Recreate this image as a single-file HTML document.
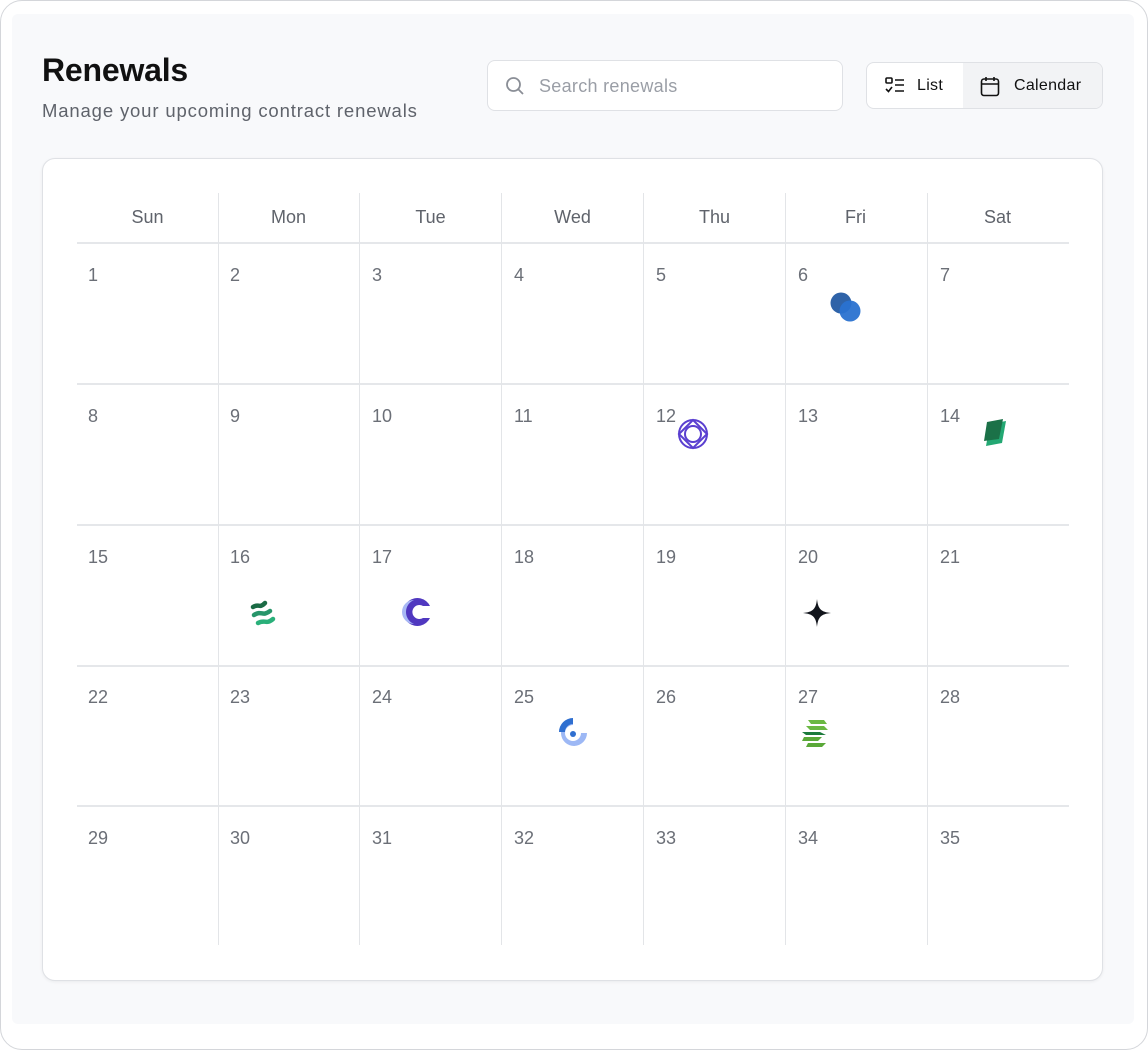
<!DOCTYPE html>
<html><head><meta charset="utf-8"><style>
*{box-sizing:border-box;margin:0;padding:0}
body{width:1148px;height:1038px;background:#fff;font-family:"Liberation Sans",sans-serif;position:relative;overflow:hidden}
.frame{position:absolute;left:0;top:0;width:1148px;height:1050px;border:1px solid #d4d6da;border-radius:22px;background:#fff}
.panel{position:absolute;left:12px;top:14px;width:1122px;height:1010px;background:#f8f9fb;border-radius:6px}
h1{position:absolute;left:42px;top:52px;font-size:32px;font-weight:700;color:#111;letter-spacing:-0.2px}
.sub{position:absolute;left:42px;top:100px;font-size:18.5px;color:#5f636b;letter-spacing:0.85px}
.search{position:absolute;left:487px;top:60px;width:356px;height:51px;background:#fff;border:1px solid #dfe1e5;border-radius:8px}
.search span{position:absolute;left:51px;top:15px;font-size:18px;color:#9a9ea6;letter-spacing:.3px}
.tog{position:absolute;left:866px;top:62px;width:237px;height:47px;background:#fff;border:1px solid #dfe1e5;border-radius:8px;overflow:hidden}
.tog .cal{position:absolute;left:96px;top:0;width:141px;height:47px;background:#f2f3f5}
.tog span{position:absolute;top:14px;font-size:16px;color:#111;font-weight:500;letter-spacing:.3px}
.card{position:absolute;left:42px;top:158px;width:1061px;height:823px;background:#fff;border:1px solid #dfe1e5;border-radius:13px;box-shadow:0 1px 3px rgba(0,0,0,.06)}
.v{position:absolute;top:193px;height:752px;width:1px;background:#e3e5e8}
.h{position:absolute;left:77px;width:992px;height:2px;background:#e5e7ea}
.dh{position:absolute;top:207px;width:141px;text-align:center;font-size:18px;color:#5f636b}
.n{position:absolute;font-size:18px;color:#6b6f77}
.ic{position:absolute}
</style></head><body>
<div class="frame"></div>
<div class="panel"></div>
<h1>Renewals</h1>
<div class="sub">Manage your upcoming contract renewals</div>
<div class="search"><svg style="position:absolute;left:17px;top:15px" width="20" height="20" viewBox="0 0 20 20" fill="none" stroke="#8a8e96" stroke-width="1.8"><circle cx="8.5" cy="8.5" r="6.5"/><path d="M13.5 13.5L18 18"/></svg><span>Search renewals</span></div>
<div class="tog"><div class="cal"></div>
<svg style="position:absolute;left:18px;top:14px" width="20" height="18" viewBox="0 0 20 18" fill="none" stroke="#111" stroke-width="1.6"><rect x="1" y="1" width="6" height="5" rx="1"/><path d="M1 12l2.5 2.5L7 10M10 3h9M10 8h9M10 14h9"/></svg>
<span style="left:50px">List</span>
<svg style="position:absolute;left:113px;top:13px" width="20" height="21" viewBox="0 0 20 21" fill="none" stroke="#111" stroke-width="1.6"><rect x="1.5" y="3" width="17" height="16.5" rx="2.5"/><path d="M1.5 8h17M6 1v4M14 1v4"/></svg>
<span style="left:147px">Calendar</span></div>
<div class="card"></div>
<div class="h" style="top:242px"></div>
<div class="h" style="top:383px"></div>
<div class="h" style="top:524px"></div>
<div class="h" style="top:665px"></div>
<div class="h" style="top:805px"></div>
<div class="v" style="left:218px"></div><div class="v" style="left:359px"></div><div class="v" style="left:501px"></div><div class="v" style="left:643px"></div><div class="v" style="left:785px"></div><div class="v" style="left:927px"></div>
<div class="dh" style="left:77px">Sun</div><div class="dh" style="left:218px">Mon</div><div class="dh" style="left:360px">Tue</div><div class="dh" style="left:502px">Wed</div><div class="dh" style="left:644px">Thu</div><div class="dh" style="left:785px">Fri</div><div class="dh" style="left:927px">Sat</div>
<div id="nums"></div>
<script>
var xs=[88,230,372,514,656,798,940],ys=[265,406,547,687,828],h='';
for(var r=0;r<5;r++)for(var c=0;c<7;c++){h+='<div class="n" style="left:'+xs[c]+'px;top:'+ys[r]+'px">'+(r*7+c+1)+'</div>';}
document.getElementById('nums').innerHTML=h;
</script>
<svg class="ic" style="left:829px;top:291px" width="34" height="32"><circle cx="12" cy="12" r="10.5" fill="#2f63a8"/><circle cx="21" cy="20" r="10.5" fill="#2a72d0" opacity=".95"/></svg>
<svg class="ic" style="left:677px;top:418px" width="32" height="32" viewBox="0 0 32 32" fill="none" stroke="#5a3fd0" stroke-width="2"><circle cx="16" cy="16" r="14"/><path d="M16 2L30 16L16 30L2 16Z"/><circle cx="16" cy="16" r="8"/></svg>
<svg class="ic" style="left:982px;top:418px" width="34" height="32"><path d="M8 6l16-3-4 22-16 3z" fill="#23a873"/><path d="M5 4l16-3-4 20-15 2z" fill="#1b7148"/></svg>
<svg class="ic" style="left:248px;top:596px" width="34" height="32" fill="none" stroke-width="4.5" stroke-linecap="round"><path d="M5 11c6-4 6 2 12-4" stroke="#1b6b45"/><path d="M6 19c8-5 8 2 16-4" stroke="#27956a"/><path d="M10 27c7-4 8 2 15-4" stroke="#2ab07a"/></svg>
<svg class="ic" style="left:402px;top:596px" width="32" height="32"><path d="M28 10A14 14 0 1 0 28 22L21 22A7 7 0 1 1 21 10Z" fill="#5038c0"/><path d="M12 4A13 13 0 0 0 12 28A9 9 0 0 1 12 4Z" fill="#a8b8f5"/></svg>
<svg class="ic" style="left:802px;top:598px" width="30" height="30"><path d="M15 1C16 11 19 14 29 15C19 16 16 19 15 29C14 19 11 16 1 15C11 14 14 11 15 1Z" fill="#12151c"/></svg>
<svg class="ic" style="left:556px;top:716px" width="34" height="34"><path d="M17 4A13 13 0 1 0 31 17L25 17A8 8 0 1 1 17 9Z" fill="#9db8f5"/><path d="M17 2A14 14 0 0 0 3 16L9 16A8 8 0 0 1 17 8Z" fill="#2f6fd0"/><circle cx="17" cy="18" r="3" fill="#2f6fd0"/></svg>
<svg class="ic" style="left:800px;top:718px" width="34" height="34"><path d="M8 2h16l3 4H11zM6 8h18l4 4H10z" fill="#6ab842"/><path d="M2 14h18l6 3H6z" fill="#1c7a3c"/><path d="M4 19h18l-4 4H2zM8 25h18l-4 4H6z" fill="#5aa838"/></svg>
</body></html>
